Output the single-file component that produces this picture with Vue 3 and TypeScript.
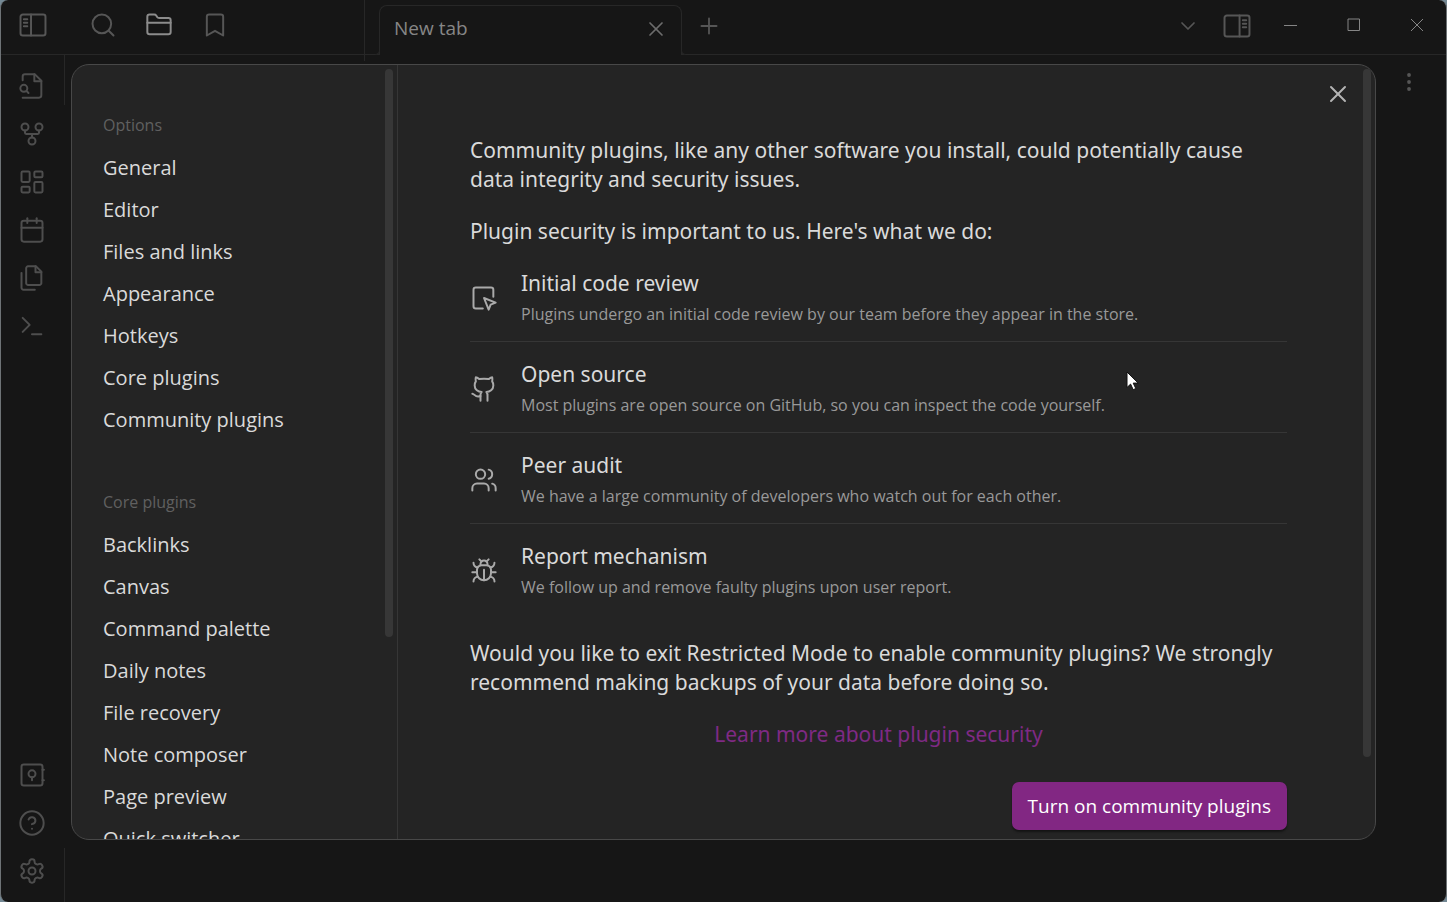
<script setup lang="ts">
import { h, ref } from 'vue'
import type { FunctionalComponent } from 'vue'

const circle = (x: number, y: number, r: number): string =>
  `M${x - r} ${y}a${r} ${r} 0 1 0 ${2 * r} 0a${r} ${r} 0 1 0 ${-2 * r} 0`
const box = (x: number, y: number, w: number, ht: number, r: number): string =>
  `M${x + r} ${y}h${w - 2 * r}a${r} ${r} 0 0 1 ${r} ${r}v${ht - 2 * r}a${r} ${r} 0 0 1 ${-r} ${r}h${2 * r - w}a${r} ${r} 0 0 1 ${-r} ${-r}v${2 * r - ht}a${r} ${r} 0 0 1 ${r} ${-r}z`

const icons: Record<string, string[]> = {
  sidebarLeft: [box(1.3, 3, 21.4, 18, 2), 'M10.3 3v18', 'M4.2 7h2.9M4.2 10h2.9M4.2 13h2.9'],
  sidebarRight: [box(1.3, 3, 21.4, 18, 2), 'M14.2 3v18', 'M17 7h2.9M17 10h2.9M17 13h2.9'],
  search: [circle(11, 11, 8), 'm21 21-4.3-4.3'],
  folder: [
    'M20 20a2 2 0 0 0 2-2V8a2 2 0 0 0-2-2h-7.9a2 2 0 0 1-1.69-.9L9.6 3.9A2 2 0 0 0 7.93 3H4a2 2 0 0 0-2 2v13a2 2 0 0 0 2 2Z',
    'M2 10h20',
  ],
  bookmark: ['m19 21-7-4-7 4V5a2 2 0 0 1 2-2h10a2 2 0 0 1 2 2v16z'],
  close: ['M18 6 6 18', 'm6 6 12 12'],
  plus: ['M5 12h14', 'M12 5v14'],
  chevron: ['m6 9 6 6 6-6'],
  fileSearch: [
    'M4 22h14a2 2 0 0 0 2-2V7.5L14.5 2H6a2 2 0 0 0-2 2v3',
    'M14 2v6h6',
    circle(5, 14, 3),
    'm9 18-1.5-1.5',
  ],
  graph: [
    circle(12, 18, 3),
    circle(6, 6, 3),
    circle(18, 6, 3),
    'M18 9v2c0 .6-.4 1-1 1H7c-.6 0-1-.4-1-1V9',
    'M12 12v3',
  ],
  dashboard: [box(3, 3, 7, 9, 1), box(14, 3, 7, 5, 1), box(14, 12, 7, 9, 1), box(3, 16, 7, 5, 1)],
  calendar: [box(3, 4, 18, 18, 2), 'M16 2v4', 'M8 2v4', 'M3 10h18'],
  files: [
    'M15.5 2H8.6c-.4 0-.8.2-1.1.5-.3.3-.5.7-.5 1.1v12.8c0 .4.2.8.5 1.1.3.3.7.5 1.1.5h9.8c.4 0 .8-.2 1.1-.5.3-.3.5-.7.5-1.1V6.5L15.5 2z',
    'M3 7.6v12.8c0 .4.2.8.5 1.1.3.3.7.5 1.1.5h9.8',
    'M15 2v5h5',
  ],
  terminal: ['m4 17 6-6-6-6', 'M12 19h8'],
  vault: [box(3, 3, 18, 18, 2), circle(12, 11, 3), 'M12 14v2.5', 'M21 7.5h1.2', 'M21 16.5h1.2'],
  help: [circle(12, 12, 10), 'M9.09 9a3 3 0 0 1 5.83 1c0 2-3 3-3 3', 'M12 17h.01'],
  settings: [
    'M12.22 2h-.44a2 2 0 0 0-2 2v.18a2 2 0 0 1-1 1.73l-.43.25a2 2 0 0 1-2 0l-.15-.08a2 2 0 0 0-2.73.73l-.22.38a2 2 0 0 0 .73 2.73l.15.1a2 2 0 0 1 1 1.72v.51a2 2 0 0 1-1 1.74l-.15.09a2 2 0 0 0-.73 2.73l.22.38a2 2 0 0 0 2.73.73l.15-.08a2 2 0 0 1 2 0l.43.25a2 2 0 0 1 1 1.73V20a2 2 0 0 0 2 2h.44a2 2 0 0 0 2-2v-.18a2 2 0 0 1 1-1.73l.43-.25a2 2 0 0 1 2 0l.15.08a2 2 0 0 0 2.73-.73l.22-.39a2 2 0 0 0-.73-2.73l-.15-.08a2 2 0 0 1-1-1.74v-.5a2 2 0 0 1 1-1.74l.15-.09a2 2 0 0 0 .73-2.73l-.22-.38a2 2 0 0 0-2.73-.73l-.15.08a2 2 0 0 1-2 0l-.43-.25a2 2 0 0 1-1-1.73V4a2 2 0 0 0-2-2z',
    circle(12, 12, 3),
  ],
  inspect: [
    'M20 11V5a2 2 0 0 0-2-2H5a2 2 0 0 0-2 2v14a2 2 0 0 0 2 2h6',
    'm12 12 4 10 1.7-4.3L22 16Z',
  ],
  github: [
    'M15 22v-4a4.8 4.8 0 0 0-1-3.5c3 0 6-2 6-5.5.08-1.25-.27-2.48-1-3.5.28-1.15.28-2.35 0-3.5 0 0-1 0-3 1.5-2.64-.5-5.36-.5-8 0C6 2 5 2 5 2c-.3 1.15-.3 2.35 0 3.5A5.403 5.403 0 0 0 4 9c0 3.5 3 5.5 6 5.5-.39.49-.68 1.05-.85 1.65-.17.6-.22 1.23-.15 1.85v4',
    'M9 18c-4.51 2-5-2-7-2',
  ],
  users: [
    'M16 21v-2a4 4 0 0 0-4-4H6a4 4 0 0 0-4 4v2',
    circle(9, 7, 4),
    'M22 21v-2a4 4 0 0 0-3-3.87',
    'M16 3.13a4 4 0 0 1 0 7.75',
  ],
  bug: [
    'm8 2 1.88 1.88',
    'M14.12 3.88 16 2',
    'M9 7.13v-1a3.003 3.003 0 1 1 6 0v1',
    'M12 20c-3.3 0-6-2.7-6-6v-3a4 4 0 0 1 4-4h4a4 4 0 0 1 4 4v3c0 3.3-2.7 6-6 6',
    'M12 20v-9',
    'M6.53 9C4.6 8.8 3 7.1 3 5',
    'M6 13H2',
    'M3 21c0-2.1 1.7-3.9 3.8-4',
    'M20.97 5c0 2.1-1.6 3.8-3.5 4',
    'M22 13h-4',
    'M17.2 17c2.1.1 3.8 1.9 3.8 4',
  ],
  dots: [circle(12, 6, 0.8), circle(12, 12, 0.8), circle(12, 18, 0.8)],
}

const Icon: FunctionalComponent<{ name: string }> = (props) =>
  h(
    'svg',
    {
      class: 'icon',
      viewBox: '0 0 24 24',
      fill: 'none',
      stroke: 'currentColor',
      'stroke-width': 1.7,
      'stroke-linecap': 'round',
      'stroke-linejoin': 'round',
      'aria-hidden': 'true',
    },
    icons[props.name].map((d) => h('path', { d })),
  )
Icon.props = ['name']

interface Action {
  icon: string
  label: string
}

const ribbonTop: Action[] = [
  { icon: 'fileSearch', label: 'Open quick switcher' },
  { icon: 'graph', label: 'Open graph view' },
  { icon: 'dashboard', label: 'Create new canvas' },
  { icon: 'calendar', label: "Open today's daily note" },
  { icon: 'files', label: 'Insert template' },
  { icon: 'terminal', label: 'Open command palette' },
]
const ribbonBottom: Action[] = [
  { icon: 'vault', label: 'Open another vault' },
  { icon: 'help', label: 'Help' },
  { icon: 'settings', label: 'Settings' },
]

const groups = [
  {
    title: 'Options',
    items: ['General', 'Editor', 'Files and links', 'Appearance', 'Hotkeys', 'Core plugins', 'Community plugins'],
  },
  {
    title: 'Core plugins',
    items: [
      'Backlinks',
      'Canvas',
      'Command palette',
      'Daily notes',
      'File recovery',
      'Note composer',
      'Page preview',
      'Quick switcher',
    ],
  },
]

const measures = [
  {
    icon: 'inspect',
    title: 'Initial code review',
    text: 'Plugins undergo an initial code review by our team before they appear in the store.',
  },
  {
    icon: 'github',
    title: 'Open source',
    text: 'Most plugins are open source on GitHub, so you can inspect the code yourself.',
  },
  {
    icon: 'users',
    title: 'Peer audit',
    text: 'We have a large community of developers who watch out for each other.',
  },
  {
    icon: 'bug',
    title: 'Report mechanism',
    text: 'We follow up and remove faulty plugins upon user report.',
  },
]

const selected = ref('Community plugins')
</script>

<template>
  <div class="window">
    <header class="titlebar">
      <div class="left-tools">
        <button class="tool" aria-label="Collapse left sidebar"><Icon name="sidebarLeft" /></button>
        <div class="pane-tools">
          <button class="tool" aria-label="Search"><Icon name="search" /></button>
          <button class="tool active" aria-label="Files"><Icon name="folder" /></button>
          <button class="tool" aria-label="Bookmarks"><Icon name="bookmark" /></button>
        </div>
      </div>
      <div class="tabs">
        <div class="tab">
          <span>New tab</span>
          <button class="tool small" aria-label="Close tab"><Icon name="close" /></button>
        </div>
        <button class="tool new-tab" aria-label="New tab"><Icon name="plus" /></button>
      </div>
      <div class="right-tools">
        <button class="tool small" aria-label="Tab list"><Icon name="chevron" /></button>
        <button class="tool" aria-label="Expand right sidebar"><Icon name="sidebarRight" /></button>
      </div>
      <div class="window-controls">
        <button aria-label="Minimize">
          <svg viewBox="0 0 14 14"><path d="M0 7.5h13" /></svg>
        </button>
        <button aria-label="Maximize">
          <svg viewBox="0 0 14 14"><path d="M1 1h11.5v11.5H1z" /></svg>
        </button>
        <button aria-label="Close window">
          <svg viewBox="0 0 14 14"><path d="m1 1 12 12M13 1 1 13" /></svg>
        </button>
      </div>
    </header>

    <div class="workspace">
      <nav class="ribbon" aria-label="Ribbon">
        <div>
          <button v-for="a in ribbonTop" :key="a.icon" class="ribbon-button" :aria-label="a.label">
            <Icon :name="a.icon" />
          </button>
        </div>
        <div>
          <button v-for="a in ribbonBottom" :key="a.icon" class="ribbon-button" :aria-label="a.label">
            <Icon :name="a.icon" />
          </button>
        </div>
      </nav>
      <main class="view">
        <button class="tool" aria-label="More options"><Icon name="dots" /></button>
      </main>
    </div>

    <div class="overlay">
      <section class="modal" role="dialog" aria-label="Settings">
        <div class="nav-pane">
          <nav class="settings-nav" aria-label="Settings sections">
            <div v-for="g in groups" :key="g.title" class="group">
              <h2>{{ g.title }}</h2>
              <button
                v-for="item in g.items"
                :key="item"
                :aria-current="selected === item ? 'page' : undefined"
                @click="selected = item"
              >
                {{ item }}
              </button>
            </div>
          </nav>
          <div class="thumb"></div>
        </div>

        <div class="content">
          <p>
            Community plugins, like any other software you install, could potentially cause<br />
            data integrity and security issues.
          </p>
          <p>Plugin security is important to us. Here's what we do:</p>
          <ul>
            <li v-for="m in measures" :key="m.title">
              <Icon :name="m.icon" />
              <div>
                <h3>{{ m.title }}</h3>
                <div class="description">{{ m.text }}</div>
              </div>
            </li>
          </ul>
          <p>
            Would you like to exit Restricted Mode to enable community plugins? We strongly recommend making
            backups of your data before doing so.
          </p>
          <p class="learn"><a href="#plugin-security">Learn more about plugin security</a></p>
          <div class="actions"><button class="primary">Turn on community plugins</button></div>
          <div class="thumb content-thumb"></div>
          <button class="modal-close" aria-label="Close settings"><Icon name="close" /></button>
        </div>
      </section>
    </div>

    <svg class="pointer" viewBox="0 0 14 20" aria-hidden="true">
      <path d="M1 1v15.5l3.6-3.4 2.6 5.6 2.6-1.2-2.6-5.4h5z" />
    </svg>
  </div>
</template>

<style>
html,
body {
  background: #748995;
}
</style>

<style scoped>
.window {
  position: relative;
  box-sizing: border-box;
  height: 100vh;
  display: flex;
  flex-direction: column;
  overflow: hidden;
  background: #161616;
  border: solid #6e7376;
  border-width: 0 1px;
  border-radius: 8px;
  color: #dadada;
  font-family: 'Open Sans', 'Noto Sans', sans-serif;
  font-size: 21px;
  line-height: 29px;
}
button {
  padding: 0;
  border: 0;
  background: none;
  color: inherit;
  font: inherit;
  cursor: pointer;
}
h2,
h3,
p,
ul {
  margin: 0;
  padding: 0;
  font-size: inherit;
  font-weight: 400;
}
.icon {
  display: block;
  flex: none;
  width: 28px;
  height: 28px;
}

.titlebar {
  flex: none;
  display: flex;
  height: 54px;
  border-bottom: 1px solid #272727;
  color: #565656;
}
.left-tools {
  flex: none;
  box-sizing: border-box;
  display: flex;
  align-items: flex-start;
  width: 364px;
  height: 61px;
  padding: 11px 0 0 18px;
  border-right: 1px solid #272727;
}
.pane-tools {
  display: flex;
  gap: 28px;
  margin-left: 42px;
}
.active {
  color: #8c8c8c;
}
.tabs {
  flex: 1;
  display: flex;
  padding: 5px 0 0 14px;
}
.tab {
  position: relative;
  box-sizing: border-box;
  display: flex;
  align-items: center;
  justify-content: space-between;
  width: 303px;
  height: 50px;
  padding: 0 13px 4px 14px;
  background: #161616;
  border: 1px solid #272727;
  border-bottom: 0;
  border-radius: 8px 8px 0 0;
  color: #868686;
  font-size: 19px;
}
.tab::before,
.tab::after {
  content: '';
  position: absolute;
  bottom: 0;
  width: 4px;
  height: 5px;
  background: #161616;
  border-bottom: 1px solid #272727;
}
.tab::before {
  right: 100%;
  border-right: 1px solid #272727;
  border-bottom-right-radius: 5px;
}
.tab::after {
  left: 100%;
  border-left: 1px solid #272727;
  border-bottom-left-radius: 5px;
}
.small .icon {
  width: 24px;
  height: 24px;
}
.tab .tool {
  color: #6c6c6c;
}
.new-tab {
  align-self: flex-start;
  margin: 8px 0 0 14px;
}
.new-tab .icon {
  width: 26px;
  height: 26px;
}
.right-tools {
  display: flex;
  align-items: center;
  gap: 23px;
  padding-bottom: 3px;
}
.window-controls {
  display: flex;
  gap: 4px;
  padding-bottom: 5px;
  padding-left: 10px;
}
.window-controls button {
  width: 59px;
  display: grid;
  place-items: center;
}
.window-controls svg {
  width: 14px;
  height: 14px;
  fill: none;
  stroke: #858585;
  stroke-width: 1;
}

.workspace {
  flex: 1;
  display: flex;
  min-height: 0;
}
.ribbon {
  flex: none;
  box-sizing: border-box;
  display: flex;
  flex-direction: column;
  justify-content: space-between;
  width: 64px;
  padding: 7px 0;
  color: #4e4e4e;
  background:
    linear-gradient(#272727, #272727) top right / 1px 50px no-repeat,
    linear-gradient(#272727, #272727) bottom right / 1px 54px no-repeat;
}
.ribbon-button {
  display: flex;
  align-items: center;
  width: 63px;
  height: 48px;
  padding-left: 17px;
}
.view {
  flex: 1;
  display: flex;
  justify-content: flex-end;
  align-items: flex-start;
  padding: 13px 23px 0 0;
  color: #565656;
}

.overlay {
  position: absolute;
  inset: 0;
  display: flex;
  padding: 64px 70px 62px;
}
.modal {
  flex: 1;
  display: flex;
  min-width: 0;
  overflow: hidden;
  background: #242424;
  border: 1px solid #484848;
  border-radius: 18px;
}
.nav-pane {
  position: relative;
  flex: none;
  width: 325px;
  border-right: 1px solid #363636;
}
.settings-nav {
  box-sizing: border-box;
  height: 100%;
  padding: 38px 31px 0;
  overflow-y: auto;
  scrollbar-width: none;
}
.group {
  display: flex;
  flex-direction: column;
  margin-bottom: 39px;
}
.group h2 {
  color: #606060;
  font-size: 16px;
  line-height: 44px;
}
.group button {
  text-align: left;
  font-size: 20px;
  line-height: 42px;
}
.thumb {
  position: absolute;
  top: 4px;
  right: 4px;
  width: 8px;
  height: 568px;
  background: #373737;
  border-radius: 4px;
}
.content-thumb {
  height: 688px;
}
.content {
  position: relative;
  flex: 1;
  min-width: 0;
  padding: 71px 88px 9px 72px;
  font-family: 'Noto Sans', 'Open Sans', sans-serif;
}
.content p {
  margin-bottom: 23px;
}
.content ul {
  margin-bottom: 40px;
  list-style: none;
}
.content li {
  display: flex;
  align-items: center;
  gap: 23px;
  padding: 18px 0 15px;
  border-bottom: 1px solid #363636;
}
.content li:first-child {
  padding-top: 0;
}
.content li:last-child {
  padding-bottom: 0;
  border-bottom: 0;
}
.content li .icon {
  color: #aaaaaa;
}
.description {
  margin-top: 4px;
  color: #999999;
  font-family: 'Open Sans', 'Noto Sans', sans-serif;
  font-size: 16px;
  line-height: 24px;
}
.learn {
  text-align: center;
}
.learn a {
  color: #7f2a84;
  text-decoration: none;
}
.actions {
  display: flex;
  justify-content: flex-end;
  padding-top: 10px;
}
.primary {
  height: 48px;
  padding: 0 16px;
  border-radius: 7px;
  background: #822783;
  box-shadow: 0 2px 2px #151515;
  color: #ffffff;
  font-family: 'Open Sans', 'Noto Sans', sans-serif;
  font-size: 19px;
}
.modal-close {
  position: absolute;
  top: 15px;
  right: 23px;
  color: #b3b3b3;
}
.pointer {
  position: absolute;
  left: 1125px;
  top: 371px;
  width: 14px;
  height: 20px;
  fill: #ffffff;
  stroke: #111111;
  stroke-width: 1;
}
</style>
